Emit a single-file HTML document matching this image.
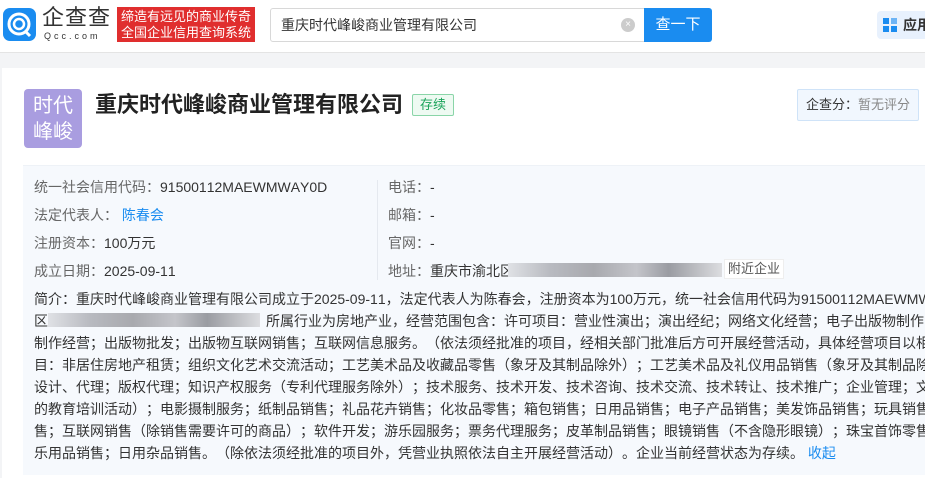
<!DOCTYPE html>
<html><head><meta charset="utf-8"><style>
*{margin:0;padding:0;box-sizing:border-box}
html,body{width:925px;height:470px;overflow:hidden;background:#f3f4f6;font-family:"Liberation Sans","Noto Sans CJK SC",sans-serif;color:#333;font-kerning:none;font-feature-settings:"chws" 0,"halt" 0,"palt" 0}
.hdr{position:absolute;left:0;top:0;width:925px;height:53px;background:#fff;border-bottom:1px solid #e4e4e4}
.logo{position:absolute;left:3px;top:8px;width:33px;height:33px;border-radius:7px;background:#1a8cf0}
.lt{position:absolute;left:42px;top:6px;font-size:22px;line-height:24px;color:#333;letter-spacing:1px}
.lu{position:absolute;left:44px;top:31px;font-size:9px;line-height:10px;color:#333;letter-spacing:3px}
.slog{position:absolute;left:117px;top:7px;width:138px;height:35px;background:#e02e2e;color:#fff;font-size:13px;line-height:16px;padding:2px 0 0 4px;white-space:nowrap}
.srch{position:absolute;left:270px;top:8px;width:375px;height:34px;border:1px solid #d8d8d8;border-radius:3px 0 0 3px;font-size:14px;line-height:32px;padding-left:10px;color:#333}
.clr{position:absolute;left:621px;top:18px;width:14px;height:14px;border-radius:50%;background:#ccc;color:#fff;font-size:10px;line-height:14px;text-align:center}
.btn{position:absolute;left:644px;top:8px;width:68px;height:34px;background:#1a8cf0;border-radius:0 3px 3px 0;color:#fff;font-size:15px;line-height:34px;text-align:center}
.app{position:absolute;left:877px;top:11px;width:60px;height:28px;background:#e8f1fd;border-radius:4px;font-size:14px;font-weight:bold;line-height:28px;padding-left:26px;color:#333}
.card{position:absolute;left:2px;top:68px;width:930px;height:410px;background:#fff}
.av{position:absolute;left:24px;top:89px;width:58px;height:59px;border-radius:4px;background:#a99de0;color:#fff;font-size:20px;line-height:26px;text-align:center;padding-top:4px}
.ttl{position:absolute;left:95px;top:90px;font-size:22px;line-height:30px;font-weight:bold;color:#222;white-space:nowrap}
.tag{position:absolute;left:412px;top:94px;width:42px;height:22px;border:1px solid #8ad5a8;background:#eefaf2;color:#1aa35a;font-size:13px;line-height:20px;text-align:center;border-radius:2px}
.score{position:absolute;left:797px;top:89px;width:122px;height:32px;border:1px solid #cfe3f8;background:#f1f7fe;font-size:13px;line-height:30px;padding-left:8px;color:#333;border-radius:2px}
.score span{color:#888}
.info{position:absolute;left:23px;top:165px;width:910px;height:310px;background:#f6f9fd;border-top:1px solid #eef2f7}
.r{position:absolute;font-size:14px;color:#333;white-space:nowrap}
.r b{font-weight:normal;color:#666}
.blue{color:#1a8cf0}
.sep{position:absolute;left:377px;top:180px;width:1px;height:100px;background:#e5e9ef}
.blur{position:absolute;height:14px;background:linear-gradient(90deg,#dfe1e5,#b8bac0 20%,#a8a9ae 40%,#c4c5ca 60%,#9a9ca2 75%,#dcdde0)}
.near{position:absolute;left:724px;top:259px;width:60px;height:20px;background:#fff;border:1px solid #eee;font-size:13px;line-height:18px;color:#555;text-align:center}
.intro{position:absolute;left:34px;top:288px;font-size:14px;line-height:22px;color:#333;white-space:nowrap}
.p{display:inline-block;width:0px}
</style></head><body>
<div class="hdr">
<div class="logo"><svg width="33" height="33" viewBox="0 0 33 33"><circle cx="16" cy="16" r="10" fill="none" stroke="#fff" stroke-width="3"/><circle cx="16" cy="16" r="5" fill="none" stroke="#fff" stroke-width="2.5"/><path d="M22 23l5 5" stroke="#fff" stroke-width="3"/></svg></div>
<div class="lt">企查查</div><div class="lu">Qcc.com</div>
<div class="slog">缔造有远见的商业传奇<br>全国企业信用查询系统</div>
<div class="srch">重庆时代峰峻商业管理有限公司</div>
<div class="clr">×</div>
<div class="btn">查一下</div>
<div class="app"><svg style="position:absolute;left:6px;top:7px" width="14" height="14"><rect x="0" y="0" width="6" height="6" fill="#1a8cf0"/><rect x="8" y="0" width="6" height="6" fill="#1a8cf0" opacity=".6"/><rect x="0" y="8" width="6" height="6" fill="#1a8cf0"/><rect x="8" y="8" width="6" height="6" fill="#1a8cf0"/></svg>应用</div>
</div>
<div class="card"></div>
<div class="av">时代<br>峰峻</div>
<div class="ttl">重庆时代峰峻商业管理有限公司</div>
<div class="tag">存续</div>
<div class="score">企查分：<span>暂无评分</span></div>
<div class="info"></div>
<div class="r" style="left:34px;top:177px"><b>统一社会信用代码：</b>91500112MAEWMWAY0D</div>
<div class="r" style="left:34px;top:205px"><b>法定代表人：</b> <span class="blue">陈春会</span></div>
<div class="r" style="left:34px;top:233px"><b>注册资本：</b>100万元</div>
<div class="r" style="left:34px;top:261px"><b>成立日期：</b>2025-09-11</div>
<div class="sep"></div>
<div class="r" style="left:388px;top:177px"><b>电话：</b>-</div>
<div class="r" style="left:388px;top:205px"><b>邮箱：</b>-</div>
<div class="r" style="left:388px;top:233px"><b>官网：</b>-</div>
<div class="r" style="left:388px;top:261px"><b>地址：</b>重庆市渝北区</div>
<div class="blur" style="left:508px;top:263px;width:214px"></div>
<div class="near">附近企业</div>
<div class="blur" style="left:48px;top:313px;width:212px"></div>
<div class="intro">简介：重庆时代峰峻商业管理有限公司成立于2025-09-11，法定代表人为陈春会，注册资本为100万元，统一社会信用代码为91500112MAEWMWAY0D<br>区<span style="display:inline-block;width:218px"></span>所属行业为房地产业，经营范围包含：许可项目：营业性演出；演出经纪；网络文化经营；电子出版物制作<br>制作经营；出版物批发；出版物互联网销售；互联网信息服务。<span class="p"></span>（依法须经批准的项目，经相关部门批准后方可开展经营活动，具体经营项目以相<br>目：非居住房地产租赁；组织文化艺术交流活动；工艺美术品及收藏品零售（象牙及其制品除外）<span class="p"></span>；工艺美术品及礼仪用品销售（象牙及其制品除<br>设计、代理；版权代理；知识产权服务（专利代理服务除外）<span class="p"></span>；技术服务、技术开发、技术咨询、技术交流、技术转让、技术推广；企业管理；文<br>的教育培训活动）<span class="p"></span>；电影摄制服务；纸制品销售；礼品花卉销售；化妆品零售；箱包销售；日用品销售；电子产品销售；美发饰品销售；玩具销售<br>售；互联网销售（除销售需要许可的商品）<span class="p"></span>；软件开发；游乐园服务；票务代理服务；皮革制品销售；眼镜销售（不含隐形眼镜）<span class="p"></span>；珠宝首饰零售<br>乐用品销售；日用杂品销售。<span class="p"></span>（除依法须经批准的项目外，凭营业执照依法自主开展经营活动）<span class="p"></span>。企业当前经营状态为存续。 <span class="blue">收起</span></div>
</body></html>
